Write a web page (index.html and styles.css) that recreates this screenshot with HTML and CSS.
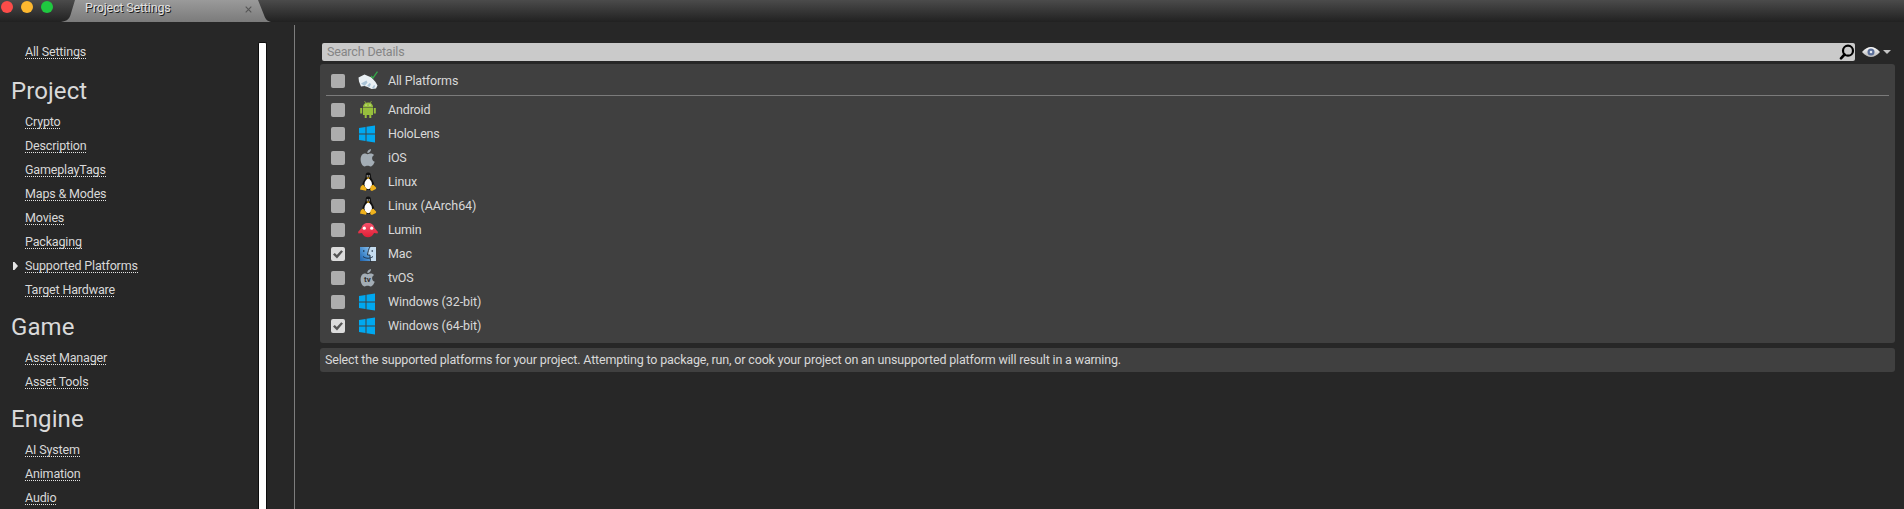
FILE: index.html
```html
<!DOCTYPE html>
<html lang="en">
<head>
<meta charset="utf-8">
<title>Project Settings</title>
<link rel="stylesheet" href="styles.css">
</head>
<body>
<svg class="defs" width="0" height="0" aria-hidden="true">
  <defs>
    <linearGradient id="tabfill" x1="0" y1="0" x2="0" y2="1"><stop offset="0" stop-color="#9a9a9a"/><stop offset="1" stop-color="#7b7b7b"/></linearGradient>
    <linearGradient id="face" x1="1" y1="0" x2="0" y2="1"><stop offset="0" stop-color="#8cc0ea"/><stop offset=".5" stop-color="#4c92d2"/><stop offset="1" stop-color="#1f62ab"/></linearGradient>
    <linearGradient id="lum" x1="0" y1="0" x2="0" y2="1"><stop offset="0" stop-color="#f5506a"/><stop offset="1" stop-color="#e01f35"/></linearGradient>
    <linearGradient id="eyew" x1="0" y1="0" x2="0" y2="1"><stop offset="0" stop-color="#fff"/><stop offset="1" stop-color="#b5b5b5"/></linearGradient>
    <symbol id="windows" viewBox="0 0 20 20"><path fill="#00a8f0" d="M1 4 7.500 3v6.500H1zM8.500 2.800 17 1.500v8H8.500zM1 10.500h6.500V17L1 16zM8.500 10.500H17v8L8.500 17.200z"/></symbol>
    <symbol id="apple" viewBox="0 0 20 20"><path fill="#a3adb5" d="M13 1c.2 2-1.500 4-3.700 4C9.100 3 11 1.300 13 1zM9.500 6.200c1-.2 2-.8 3.300-.8 1.300 0 2.600.6 3.300 1.600-2.900 1.700-2.500 5.500.6 6.700-.7 2-2.500 4.800-4.200 4.800-1.100 0-1.500-.7-2.900-.7s-1.900.7-3 .7c-2 0-4-3.700-4-7C2.600 7.700 4.700 5.600 6.700 5.600c1.200 0 2 .6 2.800.6z"/></symbol>
    <symbol id="tux" viewBox="0 0 20 20"><path fill="#111" d="M10.200.5C12.500.5 13 2.200 13 4.200c0 2.500 3.300 5.200 3.300 9.300 0 2.500-2 4.500-6 4.500s-6-2-6-4.500c0-4 3.300-6.600 3.300-9.300C7.600 2 8 .5 10.200.5z"/><ellipse cx="10.200" cy="12.300" rx="3.700" ry="5" fill="#fff"/><path fill="#fff" d="M9 7h2.500l1 2.500H8z"/><circle cx="9.300" cy="4" r=".7" fill="#ddd"/><circle cx="11.200" cy="4" r=".7" fill="#ddd"/><path fill="#f0b21c" d="M8.500 5.500h3.400L10.200 7.200zM5 12.500l3.700 4.200-.7 2L2 17.500l.8-3zM15.200 12.500l3 3.200-.3 1.300-4 2-1.700-1 .3-3.500z"/></symbol>
  </defs>
</svg>
<header class="titlebar">
  <div class="lights"><i class="light red"></i><i class="light amber"></i><i class="light green"></i></div>
  <div class="tab">
    <svg class="tab-shape" viewBox="0 0 210 22"><path fill="url(#tabfill)" d="M0 22C6 21 8 19 9.500 15L14 0H197l6 15c1.500 4 3 6 7 7z"/></svg>
    <span class="tab-title"><span class="t">Project Settings</span></span>
    <svg class="tab-close" viewBox="0 0 7 7"><path d="M.7.700l5.600 5.600M6.300.7.700 6.300" stroke="#555" stroke-width="1.100"/></svg>
  </div>
</header>
<main class="window">
  <nav class="sidebar">
    <div class="item first"><a class="t">All Settings</a></div>
    <h2><span>Project</span></h2>
    <div class="item"><a class="t">Crypto</a></div>
    <div class="item"><a class="t">Description</a></div>
    <div class="item"><a class="t">GameplayTags</a></div>
    <div class="item"><a class="t">Maps &amp; Modes</a></div>
    <div class="item"><a class="t">Movies</a></div>
    <div class="item"><a class="t">Packaging</a></div>
    <div class="item current"><a class="t">Supported Platforms</a></div>
    <div class="item"><a class="t">Target Hardware</a></div>
    <h2><span>Game</span></h2>
    <div class="item"><a class="t">Asset Manager</a></div>
    <div class="item"><a class="t">Asset Tools</a></div>
    <h2><span>Engine</span></h2>
    <div class="item"><a class="t">AI System</a></div>
    <div class="item"><a class="t">Animation</a></div>
    <div class="item"><a class="t">Audio</a></div>
  </nav>
  <div class="scrollbar"></div>
  <div class="splitter"></div>
  <section class="content">
    <div class="toolbar">
      <div class="search"><span class="t">Search Details</span>
        <svg class="lens" viewBox="0 0 16 16"><circle cx="9" cy="6.700" r="5" fill="none" stroke="#000" stroke-width="2.200"/><path d="M5.500 10.500 2 14.300" stroke="#000" stroke-width="2.600" stroke-linecap="round"/></svg>
      </div>
      <svg class="eye" viewBox="0 0 18 12"><path fill="url(#eyew)" d="M0 6C3 2.500 6 1 9 1s6 1.500 9 5c-3 3.500-6 5-9 5S3 9.500 0 6z"/><circle cx="9" cy="6" r="3.500" fill="#5b6f99"/><circle cx="9" cy="6" r="1.300" fill="#dfe6f2"/></svg>
      <svg class="caret" viewBox="0 0 8 4"><path fill="#c4c4c4" d="M0 0h8L4 4z"/></svg>
    </div>
    <div class="panel">
      <div class="row all"><i class="check"></i><svg class="icon" viewBox="0 0 20 20"><path fill="#e9f0f4" d="M.5 6.500 6.500 3.500l7 3 4 4.500 2 3.500-1.500 3-4.500.500-4-2-3-1-3.500.500L1 10.500z"/><path fill="#a9c3d6" d="M3 12.500l5.500-3 1 2-3 3.500zM9 15l2.500-3 1.500 1-1.500 3zM14 17l2-3 1.200.800-1.200 2.700z"/><path fill="none" stroke="#35a84a" stroke-width="1.300" d="m13 5 2 2L19.500.700"/></svg><span class="t">All Platforms</span></div>
      <div class="rule"></div>
      <div class="row"><i class="check"></i><svg class="icon" viewBox="0 0 20 20"><path fill="#97c03d" d="M5 7C5 4.500 7 2.500 10 2.500S15 4.500 15 7zM5 7.500h10v7.500H5zM2.200 8h2v5.500h-2zM15.800 8h2v5.500h-2zM6.700 14h2v4h-2zM11.300 14h2v4h-2z"/><path d="m6.500 1 1.200 2M13.500 1l-1.200 2" stroke="#97c03d" stroke-width=".7"/><circle cx="8" cy="5" r=".6" fill="#fff"/><circle cx="12" cy="5" r=".6" fill="#fff"/></svg><span class="t">Android</span></div>
      <div class="row"><i class="check"></i><svg class="icon"><use href="#windows"/></svg><span class="t">HoloLens</span></div>
      <div class="row"><i class="check"></i><svg class="icon"><use href="#apple"/></svg><span class="t">iOS</span></div>
      <div class="row"><i class="check"></i><svg class="icon"><use href="#tux"/></svg><span class="t">Linux</span></div>
      <div class="row"><i class="check"></i><svg class="icon"><use href="#tux"/></svg><span class="t loose">Linux (AArch64)</span></div>
      <div class="row"><i class="check"></i><svg class="icon" viewBox="0 0 20 20"><path fill="url(#lum)" d="M10 3c3.500 0 6 2 6.500 5L20 12l-.5 1.500-3.500-.5c-1 2.800-3.500 4.300-6 4.300S5 15.800 4 13l-3.500.5L0 12l3.500-4C4 5 6.500 3 10 3z"/><circle cx="6.300" cy="8.200" r="1.600" fill="#fff"/><circle cx="13.700" cy="8.200" r="1.600" fill="#fff"/></svg><span class="t">Lumin</span></div>
      <div class="row"><i class="check on"></i><svg class="icon" viewBox="0 0 20 20"><path fill="url(#face)" d="M2 3h9.500C10 6 9.800 8 9.500 11h2.500v6H2z"/><path fill="#c5dcef" d="M11.500 3H18v14h-5.800l-.2-6H9.500C9.800 8 10 6 11.500 3z"/><path d="M5.800 6v2M14.200 6v2M5 12.500c3 2.300 7 2.300 10 0M12.500 2C10.500 5 10 8 9.500 11H12c0 3 .2 5 1 7" fill="none" stroke="#17283c" stroke-width=".9"/></svg><span class="t">Mac</span></div>
      <div class="row"><i class="check"></i><svg class="icon" viewBox="0 0 20 20"><use href="#apple"/><text x="9.500" y="14" class="tv">tv</text></svg><span class="t">tvOS</span></div>
      <div class="row"><i class="check"></i><svg class="icon"><use href="#windows"/></svg><span class="t loose">Windows (32-bit)</span></div>
      <div class="row"><i class="check on"></i><svg class="icon"><use href="#windows"/></svg><span class="t loose">Windows (64-bit)</span></div>
    </div>
    <div class="note"><span class="t">Select the supported platforms for your project. Attempting to package, run, or cook your project on an unsupported platform will result in a warning.</span></div>
  </section>
</main>
</body>
</html>
```
FILE: styles.css
```css
* { box-sizing: border-box; }
body { margin: 0; height: 509px; overflow: hidden; display: flex; flex-direction: column; background: #272727; color: #d9d9d9; font: 12.5px/16px Roboto, sans-serif; }
.defs { position: absolute; }
.t { white-space: nowrap; letter-spacing: -0.16px; }
.t.loose { letter-spacing: -0.07px; }
.titlebar { height: 22px; flex: none; display: flex; background: linear-gradient(#4b4b4b, #383838 45%, #212121); }
.lights { display: flex; gap: 8px; padding: 1px 0 0 1px; width: 61px; }
.light { width: 12px; height: 12px; border-radius: 50%; }
.red { background: #fc4c49; }
.amber { background: #fdb82f; }
.green { background: #1fc840; }
.tab { position: relative; width: 210px; height: 22px; display: flex; padding-left: 24px; }
.tab-shape { position: absolute; left: 0; top: 0; width: 210px; height: 22px; }
.tab-title { position: relative; width: 160px; color: #e2e2e2; text-shadow: 1px 1px 0 #1c1c1c; }
.tab-close { position: relative; width: 7px; height: 7px; margin-top: 6px; }
.window { flex: 1; min-height: 0; display: flex; }
.sidebar { width: 258px; padding: 22px 0 0 12px; overflow: hidden; }
.item { height: 24px; padding-left: 13px; display: flex; align-items: flex-start; }
.item.first { height: 26px; }
.item a { height: 15px; background: repeating-linear-gradient(90deg, #e4e4e4 0 1px, transparent 1px 2px) 0 14px / 100% 1px no-repeat; }
.item.current { padding-left: 1px; }
.current::before { content: ""; width: 5px; height: 8px; margin: 4px 7px 0 0; background: #e4e4e4; clip-path: polygon(0 0, 30% 0, 100% 50%, 30% 100%, 0 100%); }
h2 { margin: 0 0 0 -1px; height: 44px; padding-top: 7px; font-size: 24px; line-height: 28px; font-weight: 400; letter-spacing: 0.1px; }
.scrollbar { width: 9px; margin-top: 20px; background: #fff; border: 1px solid #0c0c0c; border-bottom: 0; border-radius: 2px 2px 0 0; }
.splitter { width: 1px; margin: 3px 25px 0 27px; background: #7d7d7d; }
.content { flex: 1; min-width: 0; padding: 21px 9px 0 0; }
.toolbar { height: 18px; display: flex; align-items: center; padding-left: 2px; }
.search { width: 1533px; height: 18px; border-radius: 2px; background: #cacaca; color: #858585; display: flex; align-items: center; justify-content: space-between; padding-left: 5px; }
.lens { width: 16px; height: 16px; }
.eye { width: 18px; height: 12px; margin: 0 3px 0 7px; }
.caret { width: 8px; height: 4px; }
.panel { margin-top: 3px; height: 279px; border-radius: 3px; background: #404040; padding: 5px 6px 0; }
.row { height: 24px; display: flex; align-items: center; padding-left: 5px; }
.rule { height: 1px; margin: 2px 0; background: #7b7b7b; }
.check { width: 14px; height: 14px; border-radius: 2px; background: #adadad; margin-right: 13px; }
.check.on { background: #dcdcdc; }
.on::after { content: ""; display: block; width: 14px; height: 14px; background: #555; clip-path: polygon(2px 7.5px, 3.8px 6px, 5.8px 8px, 10.2px 3.2px, 12px 4.6px, 6px 11.6px); }
.icon { width: 20px; height: 20px; margin-right: 10px; }
.tv { font: bold 8px Roboto, sans-serif; fill: #333; text-anchor: middle; }
.note { margin-top: 5px; height: 24px; border-radius: 3px; background: #404040; padding: 4px 5px; }
```
